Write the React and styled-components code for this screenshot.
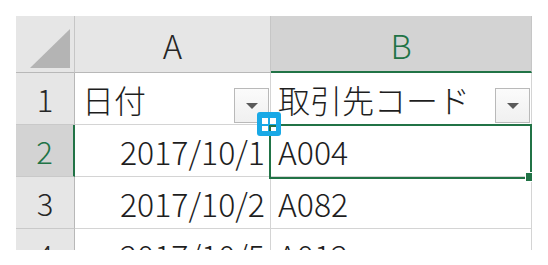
import React from "react";
import styled, { createGlobalStyle } from "styled-components";

const GlobalStyle = createGlobalStyle`
  html, body {
    margin: 0;
    padding: 0;
    background: #ffffff;
  }
  body {
    font-family: "Noto Sans CJK JP", "Noto Sans", sans-serif;
  }
`;

const GREEN = "#217346";

const rows = [
  { n: "1", a: "日付", b: "取引先コード", head: true },
  { n: "2", a: "2017/10/1", b: "A004", active: true },
  { n: "3", a: "2017/10/2", b: "A082" },
  { n: "4", a: "2017/10/5", b: "A012" },
];

const App = () => {
  return (
    <Page>
      <GlobalStyle />
      <Sheet>
        <Corner>
          <svg width="58" height="57" viewBox="0 0 58 57">
            <polygon points="14,52 54,52 54,13" fill="#b4b4b4" />
          </svg>
        </Corner>
        <ColHead>A</ColHead>
        <ColHead selected>B</ColHead>

        {rows.map((r) => (
          <React.Fragment key={r.n}>
            <RowHead selected={r.active}>{r.n}</RowHead>
            <Cell align={r.head ? "left" : "right"}>
              <span>{r.a}</span>
              {r.head && <FilterButton />}
            </Cell>
            <Cell align="left">
              <span>{r.b}</span>
              {r.head && <FilterButton />}
            </Cell>
          </React.Fragment>
        ))}

        <Selection>
          <Handle />
        </Selection>
        <Marker>
          <svg width="24" height="24" viewBox="0 0 24 24" style={{ display: "block" }}>
            <rect x="0" y="0" width="24" height="24" rx="3" fill="#19a9e6" />
            <rect x="5" y="6" width="14" height="13" fill="#ffffff" />
            <rect x="5" y="12" width="14" height="2" fill="#19a9e6" />
            <rect x="11" y="6" width="2" height="13" fill="#19a9e6" />
            <rect x="12" y="13" width="2" height="6" fill={GREEN} />
            <rect x="12" y="13" width="7" height="2" fill={GREEN} />
          </svg>
        </Marker>
      </Sheet>
    </Page>
  );
};

const FilterButton = () => (
  <Filter>
    <svg width="12" height="7" viewBox="0 0 12 7">
      <polygon points="0,0 12,0 6,6" fill="#5a5a5a" />
    </svg>
  </Filter>
);

const Page = styled.div`
  width: 548px;
  height: 265px;
  padding: 16px 0 0 16px;
  box-sizing: border-box;
`;

const Sheet = styled.div`
  position: relative;
  display: grid;
  grid-template-columns: 59px 196px 261px;
  grid-template-rows: 57px 52px 52px 52px 52px;
  width: 516px;
  height: 234px;
  overflow: hidden;
  color: #1e1e1e;
  font-size: 32px;
  font-weight: 300;
`;

const HeadBase = styled.div`
  display: flex;
  align-items: center;
  justify-content: center;
  box-sizing: border-box;
  background: #e6e6e6;
  color: #262626;
`;

const Corner = styled(HeadBase)`
  border-right: 1px solid #c6c6c6;
  border-bottom: 1px solid #b8b8b8;
  align-items: stretch;
  justify-content: stretch;
`;

const ColHead = styled(HeadBase)`
  font-size: 33px;
  padding-top: 2px;
  border-right: 1px solid #c6c6c6;
  border-bottom: ${(p) => (p.selected ? `2px solid ${GREEN}` : "1px solid #b8b8b8")};
  background: ${(p) => (p.selected ? "#d3d3d3" : "#e6e6e6")};
  color: ${(p) => (p.selected ? GREEN : "#262626")};
`;

const RowHead = styled(HeadBase)`
  font-size: 31px;
  border-bottom: 1px solid #c9c9c9;
  border-right: ${(p) => (p.selected ? `2px solid ${GREEN}` : "1px solid #b8b8b8")};
  background: ${(p) => (p.selected ? "#d3d3d3" : "#e6e6e6")};
  color: ${(p) => (p.selected ? GREEN : "#262626")};
`;

const Cell = styled.div`
  position: relative;
  display: flex;
  align-items: center;
  justify-content: ${(p) => (p.align === "right" ? "flex-end" : "flex-start")};
  box-sizing: border-box;
  padding: 0 5px 0 7px;
  border-right: 1px solid #d4d4d4;
  border-bottom: 1px solid #d4d4d4;
  background: #ffffff;
  white-space: nowrap;
`;

const Filter = styled.div`
  position: absolute;
  right: 1px;
  bottom: 1px;
  width: 35px;
  height: 35px;
  box-sizing: border-box;
  border: 1px solid #b9b9b9;
  background: linear-gradient(#fbfbfb, #f0f0f0);
  display: flex;
  align-items: center;
  justify-content: center;
  padding-top: 2px;
`;

const Selection = styled.div`
  position: absolute;
  left: 253px;
  top: 108px;
  width: 263px;
  height: 55px;
  box-sizing: border-box;
  border: 2px solid ${GREEN};
  pointer-events: none;
`;

const Handle = styled.div`
  position: absolute;
  right: -5px;
  bottom: -5px;
  width: 8px;
  height: 8px;
  background: ${GREEN};
  border: 1px solid #ffffff;
`;

const Marker = styled.div`
  position: absolute;
  left: 241px;
  top: 96px;
  width: 24px;
  height: 24px;
`;

export default App;
